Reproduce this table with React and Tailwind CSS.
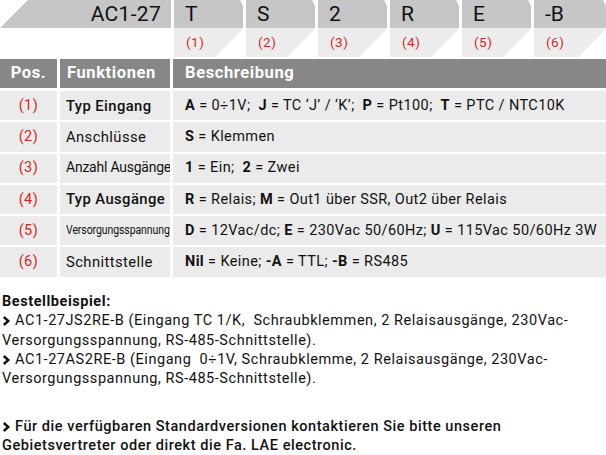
import React from "react";

const codes = [
  { c: "T", n: "(1)" },
  { c: "S", n: "(2)" },
  { c: "2", n: "(3)" },
  { c: "R", n: "(4)" },
  { c: "E", n: "(5)" },
  { c: "-B", n: "(6)" },
];

const B = ({ children }) => <span className="font-bold">{children}</span>;

const rows = [
  {
    n: "(1)",
    f: <span className="font-medium">Typ Eingang</span>,
    d: (
      <span>
        <B>A</B> = 0÷1V;&nbsp; <B>J</B> = TC ‘J’ / ‘K’;&nbsp; <B>P</B> = Pt100;&nbsp; <B>T</B> = PTC / NTC10K
      </span>
    ),
  },
  { n: "(2)", f: <span>Anschlüsse</span>, d: <span><B>S</B> = Klemmen</span> },
  {
    n: "(3)",
    f: (
      <span className="inline-block origin-left scale-x-[0.96] text-[14.5px] tracking-[-0.2px]">
        Anzahl Ausgänge
      </span>
    ),
    d: <span><B>1</B> = Ein;&nbsp; <B>2</B> = Zwei</span>,
  },
  {
    n: "(4)",
    f: <span className="font-medium">Typ Ausgänge</span>,
    d: <span><B>R</B> = Relais; <B>M</B> = Out1 über SSR, Out2 über Relais</span>,
  },
  {
    n: "(5)",
    f: (
      <span className="inline-block origin-left scale-x-[0.84] text-[12.5px] tracking-[-0.1px]">
        Versorgungsspannung
      </span>
    ),
    d: <span><B>D</B> = 12Vac/dc; <B>E</B> = 230Vac 50/60Hz; <B>U</B> = 115Vac 50/60Hz 3W</span>,
  },
  {
    n: "(6)",
    f: <span>Schnittstelle</span>,
    d: <span><B>Nil</B> = Keine; <B>-A</B> = TTL; <B>-B</B> = RS485</span>,
  },
];

const Chev = () => (
  <svg width="9" height="10" viewBox="0 0 9 10" className="inline-block mr-[4px] align-[-1px]">
    <path d="M1.8 1 L6.3 5 L1.8 9" fill="none" stroke="#111" strokeWidth="2.4" />
  </svg>
);

export default function App() {
  return (
    <div
      className="w-[606px] h-[455px] bg-white text-[#111] overflow-hidden relative"
      style={{ fontFamily: "Roboto, 'Liberation Sans', sans-serif" }}
    >
      {/* Code strip */}
      <div className="flex h-[57px]">
        <div className="w-[171px] h-[28px] bg-[#c6c6c6] [clip-path:polygon(28px_0,100%_0,100%_100%,0_100%)] flex items-center justify-end pr-[10px] text-[21px] leading-none tracking-[0.3px]">
          AC1-27
        </div>
        <div className="flex ml-[3px] gap-[3px] flex-1">
          {codes.map((k, i) => (
            <div key={i} className={`flex flex-col h-[57px] ${i === 5 ? "flex-1" : "w-[69px]"}`}>
              <div className="h-[28px] bg-[#c6c6c6] pl-[11px] flex items-center text-[21px] leading-none [clip-path:polygon(0_0,calc(100%-3px)_0,100%_6px,100%_100%,0_100%)]">
                {k.c}
              </div>
              <div className="h-[29px] bg-[#ececec] pl-[12px] flex items-center text-[13.5px] text-[#d42a1e] tracking-[0.5px] [clip-path:polygon(0_0,100%_0,100%_1px,calc(100%-28px)_100%,0_100%)]">
                {k.n}
              </div>
            </div>
          ))}
        </div>
      </div>

      {/* Table */}
      <div className="mt-[2px] flex flex-col gap-[2px]">
        <div className="flex gap-[3px] h-[29px] text-white font-bold text-[16.5px] tracking-[0.6px]">
          <div className="w-[57px] bg-[#878787] flex items-center justify-center">Pos.</div>
          <div className="w-[110px] bg-[#878787] flex items-center pl-[7px]">Funktionen</div>
          <div className="flex-1 bg-[#878787] flex items-center pl-[12px]">Beschreibung</div>
        </div>
        <div className="flex flex-col gap-[2px] mt-[1px]">
          {rows.map((r, i) => (
            <div key={i} className="flex gap-[3px] h-[29.3px] text-[14.5px]">
              <div className="w-[57px] bg-[#ebebeb] flex items-center justify-center text-[#d42a1e] tracking-[0.5px]">{r.n}</div>
              <div className="w-[110px] bg-[#ebebeb] flex items-center pl-[6px] whitespace-nowrap overflow-hidden tracking-[0.4px] text-[14.8px]">
                {r.f}
              </div>
              <div className="flex-1 bg-[#ebebeb] flex items-center pl-[12px] whitespace-nowrap tracking-[0.4px]">{r.d}</div>
            </div>
          ))}
        </div>
      </div>

      {/* Notes */}
      <div className="mt-[15px] pl-[2px] text-[14.5px] leading-[19.4px] tracking-[0.55px] whitespace-nowrap">
        <div className="font-bold">Bestellbeispiel:</div>
        <div>
          <Chev />
          AC1-27JS2RE-B (Eingang TC 1/K,&nbsp; Schraubklemmen, 2 Relaisausgänge, 230Vac-
        </div>
        <div>Versorgungsspannung, RS-485-Schnittstelle).</div>
        <div>
          <Chev />
          AC1-27AS2RE-B (Eingang&nbsp; 0÷1V, Schraubklemme, 2 Relaisausgänge, 230Vac-
        </div>
        <div>Versorgungsspannung, RS-485-Schnittstelle).</div>
        <div className="mt-[28px] font-medium">
          <Chev />
          Für die verfügbaren Standardversionen kontaktieren Sie bitte unseren
        </div>
        <div className="font-medium">Gebietsvertreter oder direkt die Fa. LAE electronic.</div>
      </div>
    </div>
  );
}
